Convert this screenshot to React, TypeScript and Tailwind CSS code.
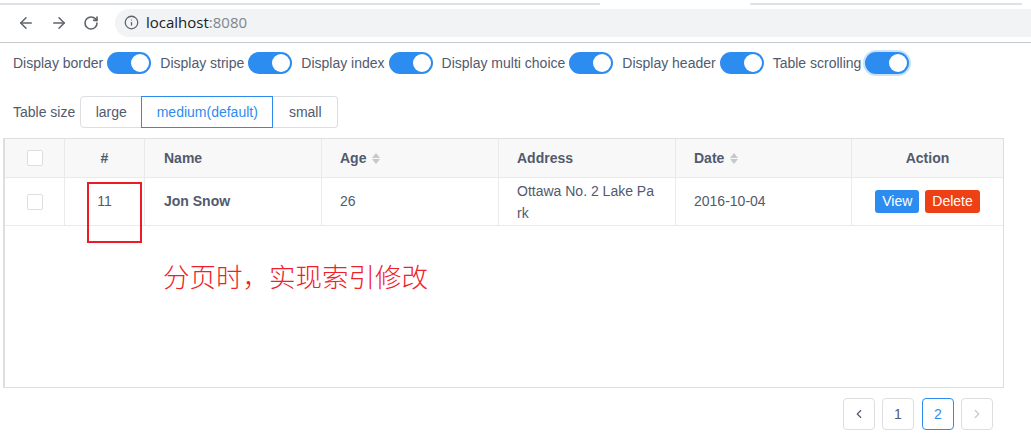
import React from "react";
import { ArrowLeft, ArrowRight, RotateCw, Info, ChevronLeft, ChevronRight } from "lucide-react";

function Switch({ focus }: { focus?: boolean }) {
  return (
    <span
      className={
        "relative inline-block w-[44px] h-[22px] rounded-full bg-[#2d8cf0] align-middle " +
        (focus ? "shadow-[0_0_0_2px_rgba(45,140,240,0.25)]" : "")
      }
    >
      <span className="absolute right-[2px] top-[2px] w-[18px] h-[18px] rounded-full bg-white" />
    </span>
  );
}

function SortIcon() {
  return (
    <span className="inline-flex flex-col ml-[6px] gap-[1px] align-middle">
      <svg width="8" height="5" viewBox="0 0 8 5"><path d="M0 5 L4 0 L8 5 Z" fill="#c5c8ce" /></svg>
      <svg width="8" height="5" viewBox="0 0 8 5"><path d="M0 0 L4 5 L8 0 Z" fill="#c5c8ce" /></svg>
    </span>
  );
}

function Checkbox() {
  return <span className="inline-block w-[16px] h-[16px] rounded-[2px] border border-[#dcdee2] bg-white" />;
}

export default function App() {
  const toggles = [
    "Display border",
    "Display stripe",
    "Display index",
    "Display multi choice",
    "Display header",
    "Table scrolling",
  ];
  return (
    <div className="w-[1031px] h-[447px] bg-white overflow-hidden text-[14px] text-[#515a6e]" style={{ fontFamily: '"Liberation Sans", Arial, sans-serif' }}>
      {/* Browser chrome */}
      <div className="relative h-[43px] border-b border-[#c8c8c8]">
        <div className="absolute left-0 top-[3px] h-[2px] w-[600px] bg-[#dee1e6]" />
        <div className="absolute left-[750px] top-[3px] h-[2px] w-[272px] bg-[#dee1e6] rounded-l" />
        <div className="flex items-center h-full pt-[3px]">
          <div className="flex items-center gap-[15px] pl-[17px] text-[#5f6368]">
            <ArrowLeft size={18} strokeWidth={2} />
            <ArrowRight size={18} strokeWidth={2} />
            <RotateCw size={16} strokeWidth={2.4} />
          </div>
          <div className="ml-[16px] flex-1 h-[28px] rounded-l-full bg-[#f1f3f4] flex items-center pl-[9px]">
            <Info size={15} strokeWidth={2} className="text-[#5f6368]" />
            <span className="ml-[7px] text-[15px] text-[#202124]" style={{ fontFamily: '"Open Sans", "Liberation Sans", sans-serif' }}>
              localhost<span className="text-[#80868b]">:8080</span>
            </span>
          </div>
        </div>
      </div>

      {/* Toggles */}
      <div className="flex items-center pl-[13px] pt-[9px] h-[31px]">
        {toggles.map((t, i) => (
          <div key={t} className="flex items-center mr-[9px]">
            <span className="mr-[4px] leading-[22px]">{t}</span>
            <Switch focus={i === toggles.length - 1} />
          </div>
        ))}
      </div>

      {/* Table size */}
      <div className="flex items-center pl-[13px] mt-[22px] h-[32px]">
        <span className="mr-[5px]">Table size</span>
        <div className="flex h-[32px]">
          <div className="w-[62px] flex items-center justify-center border border-[#dcdee2] rounded-l-[4px] text-[#515a6e]">large</div>
          <div className="w-[132px] flex items-center justify-center border border-[#2d8cf0] text-[#2d8cf0] -ml-[1px] relative">medium(default)</div>
          <div className="w-[65px] flex items-center justify-center border border-[#dcdee2] border-l-0 rounded-r-[4px]">small</div>
        </div>
      </div>

      {/* Table */}
      <div className="relative ml-[3px] mt-[10px] w-[1001px] h-[250px] border border-[#dcdee2] border-l-2">
        <div className="flex h-[39px] bg-[#f8f8f9] border-b border-[#e8eaec] font-bold">
          <div className="w-[60px] flex items-center justify-center border-r border-[#e8eaec]"><Checkbox /></div>
          <div className="w-[80px] flex items-center justify-center border-r border-[#e8eaec]">#</div>
          <div className="w-[177px] flex items-center pl-[19px] border-r border-[#e8eaec]">Name</div>
          <div className="w-[177px] flex items-center pl-[18px] border-r border-[#e8eaec]">Age<SortIcon /></div>
          <div className="w-[177px] flex items-center pl-[18px] border-r border-[#e8eaec]">Address</div>
          <div className="w-[176px] flex items-center pl-[18px] border-r border-[#e8eaec]">Date<SortIcon /></div>
          <div className="flex-1 flex items-center justify-center">Action</div>
        </div>
        <div className="flex h-[48px] border-b border-[#e8eaec]">
          <div className="w-[60px] flex items-center justify-center border-r border-[#e8eaec]"><Checkbox /></div>
          <div className="w-[80px] flex items-center justify-center border-r border-[#e8eaec]">11</div>
          <div className="w-[177px] flex items-center pl-[19px] border-r border-[#e8eaec] font-bold">Jon Snow</div>
          <div className="w-[177px] flex items-center pl-[18px] border-r border-[#e8eaec]">26</div>
          <div className="w-[177px] flex flex-col justify-center pl-[18px] border-r border-[#e8eaec] leading-[22px]">
            <span>Ottawa No. 2 Lake Pa</span>
            <span>rk</span>
          </div>
          <div className="w-[176px] flex items-center pl-[18px] border-r border-[#e8eaec]">2016-10-04</div>
          <div className="flex-1 flex items-center justify-center gap-[6px]">
            <span className="h-[23px] px-[7px] flex items-center rounded-[3px] bg-[#2d8cf0] text-white">View</span>
            <span className="h-[23px] px-[7px] flex items-center rounded-[3px] bg-[#ed4014] text-white">Delete</span>
          </div>
        </div>
        <div className="pl-[158px] pt-[34px] text-[26.5px] text-[#f0202a] leading-[32px]" style={{ fontFamily: '"Noto Sans CJK SC", sans-serif', fontWeight: 300 }}>
          分页时，实现索引修改
        </div>
        <div className="absolute left-[82px] top-[43px] w-[55px] h-[61px] border-2 border-[#ec1c24]" />
      </div>

      {/* Pagination */}
      <div className="flex justify-end pr-[38px] mt-[10px]">
        <div className="w-[32px] h-[32px] rounded-[4px] border border-[#dcdee2] flex items-center justify-center text-[#515a6e]"><ChevronLeft size={14} strokeWidth={2} /></div>
        <div className="ml-[7px] w-[32px] h-[32px] rounded-[4px] border border-[#dcdee2] flex items-center justify-center">1</div>
        <div className="ml-[8px] w-[32px] h-[32px] rounded-[4px] border border-[#2d8cf0] text-[#2d8cf0] flex items-center justify-center">2</div>
        <div className="ml-[7px] w-[32px] h-[32px] rounded-[4px] border border-[#dcdee2] flex items-center justify-center text-[#c5c8ce]"><ChevronRight size={14} strokeWidth={2} /></div>
      </div>
    </div>
  );
}
